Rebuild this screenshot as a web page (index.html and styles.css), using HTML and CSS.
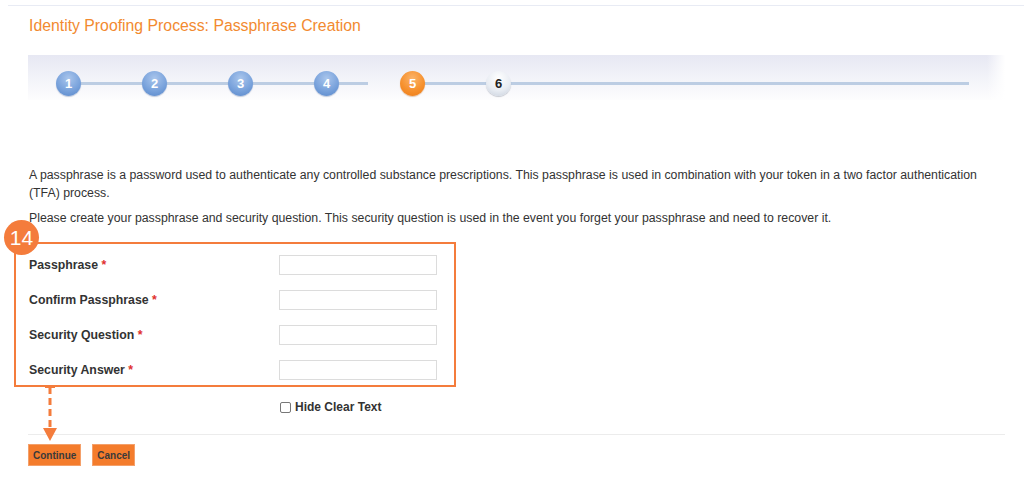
FILE: index.html
```html
<!DOCTYPE html>
<html>
<head>
<meta charset="utf-8">
<link rel="stylesheet" href="styles.css">
</head>
<body>
<div class="topline"></div>
<div class="page">
  <h1 class="title">Identity Proofing Process: Passphrase Creation</h1>
  <div class="stepper">
    <div class="track">
      <span class="seg seg-a"></span>
      <span class="seg seg-b"></span>
      <span class="seg seg-c"></span>
    </div>
    <div class="steps">
      <span class="step done">1</span>
      <span class="step done">2</span>
      <span class="step done">3</span>
      <span class="step done">4</span>
      <span class="step current">5</span>
      <span class="step todo">6</span>
    </div>
  </div>
  <p class="intro">A passphrase is a password used to authenticate any controlled substance prescriptions. This passphrase is used in combination with your token in a two factor authentication (TFA) process.</p>
  <p class="intro second">Please create your passphrase and security question. This security question is used in the event you forget your passphrase and need to recover it.</p>
  <div class="form-box">
    <span class="badge">14</span>
    <div class="row"><label>Passphrase <span class="req">*</span></label><span class="input"></span></div>
    <div class="row"><label>Confirm Passphrase <span class="req">*</span></label><span class="input"></span></div>
    <div class="row"><label>Security Question <span class="req">*</span></label><span class="input"></span></div>
    <div class="row"><label>Security Answer <span class="req">*</span></label><span class="input"></span></div>
    <svg class="arrow" width="20" height="56" viewBox="0 0 20 56">
      <line x1="4" y1="1" x2="14" y2="1" stroke="#f47c3c" stroke-width="2"/>
      <line x1="9" y1="1" x2="9" y2="44" stroke="#f47c3c" stroke-width="3" stroke-dasharray="7 4"/>
      <polygon points="2,42 16,42 9,55" fill="#f47c3c"/>
    </svg>
  </div>
  <div class="hide-row"><span class="checkbox"></span><span class="hide-label">Hide Clear Text</span></div>
  <div class="divider"></div>
  <div class="buttons">
    <button class="btn">Continue</button>
    <button class="btn">Cancel</button>
  </div>
</div>
</body>
</html>
```

FILE: styles.css
```css
html, body {
  margin: 0;
  padding: 0;
  background: #ffffff;
  font-family: "Liberation Sans", Arial, sans-serif;
  color: #333333;
}

.topline {
  margin: 5px 0 0 8px;
  height: 1px;
  background: #e8ebf4;
}

.page {
  padding: 0 19px 0 28px;
}

.title {
  margin: 10px 0 0 1px;
  font-size: 15.8px;
  line-height: 20px;
  font-weight: normal;
  color: #f28a30;
}

.stepper {
  position: relative;
  margin-top: 19px;
  height: 45px;
  background: linear-gradient(to bottom, #e7e8f3 0%, #f1f2f8 45%, #fdfdfe 100%);
}

.stepper::after {
  content: "";
  position: absolute;
  right: 0;
  top: 0;
  bottom: 0;
  width: 18px;
  background: linear-gradient(to right, rgba(255,255,255,0), #ffffff);
}

.track {
  position: absolute;
  left: 40px;
  top: 27px;
  width: 901px;
  height: 3px;
}

.seg {
  position: absolute;
  top: 0;
  height: 3px;
  background: #bccde3;
}

.seg-a { left: 0; width: 300px; }
.seg-b { left: 344px; width: 86px; }
.seg-c { left: 430px; width: 471px; }

.steps {
  position: relative;
  display: flex;
  gap: 61px;
  padding: 16px 0 0 28px;
}

.step {
  width: 25px;
  height: 25px;
  border-radius: 50%;
  display: flex;
  align-items: center;
  justify-content: center;
  font-size: 13px;
  font-weight: bold;
  line-height: 1;
}

.step.done {
  color: #ffffff;
  background: radial-gradient(circle at 50% 30%, #a9c5ec 0%, #7aa3dc 55%, #5585c9 100%);
  box-shadow: 0 1px 1px rgba(80, 110, 160, 0.35);
}

.step.current {
  color: #ffffff;
  background: radial-gradient(circle at 50% 30%, #fbb46a 0%, #f6912e 55%, #ec7a16 100%);
  box-shadow: 0 1px 1px rgba(180, 100, 30, 0.35);
}

.step.todo {
  color: #222222;
  background: radial-gradient(circle at 50% 30%, #ffffff 0%, #e9edf3 55%, #c6cedb 100%);
  box-shadow: 0 1px 1px rgba(100, 110, 130, 0.35);
}

.intro {
  margin: 66px 0 0 1px;
  font-size: 12.3px;
  line-height: 18px;
  color: #333333;
}

.intro.second {
  margin-top: 7px;
}

.form-box {
  position: relative;
  margin: 15px 0 0 -14px;
  width: 438px;
  border: 2px solid #f47c3c;
  padding: 11px 0 5px 0;
}

.badge {
  position: absolute;
  left: -12px;
  top: -24px;
  width: 35px;
  height: 35px;
  border-radius: 50%;
  background: #f47c3c;
  color: #ffffff;
  font-size: 21px;
  line-height: 35px;
  text-align: center;
}

.row {
  display: flex;
  align-items: center;
  height: 20px;
  margin-bottom: 15px;
  padding-left: 13px;
}

.row:last-of-type {
  margin-bottom: 0;
}

.row label {
  width: 250px;
  font-size: 12.3px;
  font-weight: bold;
  color: #333333;
}

.req {
  color: #e0312f;
}

.input {
  width: 156px;
  height: 18px;
  border: 1px solid #dcdcdc;
  background: #ffffff;
}

.arrow {
  position: absolute;
  left: 25px;
  top: 100%;
  margin-top: 1px;
}

.hide-row {
  display: flex;
  align-items: center;
  margin: 12px 0 0 252px;
  height: 16px;
}

.checkbox {
  width: 9px;
  height: 9px;
  border: 1px solid #777777;
  border-radius: 2px;
  margin-right: 4px;
}

.hide-label {
  font-size: 12px;
  font-weight: bold;
  color: #333333;
}

.divider {
  margin-top: 19px;
  height: 1px;
  background: #ececec;
}

.buttons {
  display: flex;
  gap: 11px;
  margin-top: 9px;
}

.btn {
  height: 22px;
  padding: 0 4px;
  border: 1px solid #f4a06a;
  background: #f47c2c;
  color: #3a3a3a;
  font-family: "Liberation Sans", Arial, sans-serif;
  font-size: 10px;
  font-weight: bold;
  cursor: pointer;
}
```
